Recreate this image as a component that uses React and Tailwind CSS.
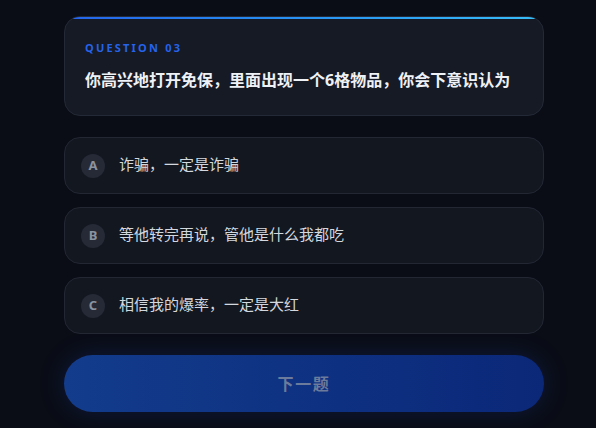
import React from "react";

const options = [
  { key: "A", text: "诈骗，一定是诈骗" },
  { key: "B", text: "等他转完再说，管他是什么我都吃" },
  { key: "C", text: "相信我的爆率，一定是大红" },
];

export default function App() {
  return (
    <div
      className="min-h-[428px] w-full bg-[#0a0d16] pt-4"
      style={{ fontFamily: '"Noto Sans", "Noto Sans CJK SC", sans-serif' }}
    >
      <div className="ml-16 w-[480px]">
        {/* question card */}
        <div className="relative overflow-hidden rounded-2xl border border-[#232936] bg-[#161a24] px-5 pb-[23px] pt-[23px]">
          <div className="absolute left-0 right-0 top-0 h-[2px] bg-gradient-to-r from-[#2563eb] to-[#38bdf8]" />
          <div className="text-[11px] font-bold leading-4 tracking-[0.2em] text-[#2563eb]">
            QUESTION 03
          </div>
          <h2 className="mt-[12px] text-[16px] font-bold leading-[24px] text-[#eef1f6]">
            你高兴地打开免保，里面出现一个6格物品，你会下意识认为
          </h2>
        </div>

        {/* options */}
        <div className="mt-[21px] flex flex-col gap-[13px]">
          {options.map((o) => (
            <button
              key={o.key}
              className="flex h-[57px] w-full items-center gap-3.5 rounded-2xl border border-[#222733] bg-[#131720] px-4 text-left"
            >
              <span className="flex h-6 w-6 shrink-0 items-center justify-center rounded-full bg-[#252a36] text-[13px] font-bold text-[#8b92a0]">
                {o.key}
              </span>
              <span className="-mt-1 text-[15px] leading-5 text-[#d3d7de]">{o.text}</span>
            </button>
          ))}
        </div>

        {/* next */}
        <button className="mt-[21px] flex h-[57px] w-full items-center justify-center rounded-full bg-gradient-to-r from-[#133c8c] to-[#0b2778] text-[16px] font-bold tracking-[0.1em] text-[#6c7b9b] shadow-[0_0_24px_rgba(30,64,175,0.25)]">
          下一题
        </button>
      </div>
    </div>
  );
}
